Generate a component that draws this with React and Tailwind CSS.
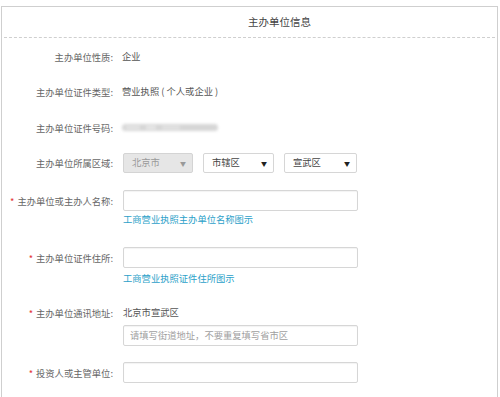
import React from "react";

const font = { fontFamily: '"Noto Sans CJK SC", "Noto Sans", sans-serif' };

function Label({ children, req }) {
  return (
    <div className="w-[120px] shrink-0 text-right text-[9.3px] text-[#666] leading-[14px] pr-[9px] whitespace-nowrap">
      {req && <span className="text-[#e4393c] mr-[3px]">*</span>}
      {children}:
    </div>
  );
}

function Input({ placeholder }) {
  return (
    <div className="w-[235px] h-[21px] border border-[#d6d6d6] rounded-[2px] bg-white shadow-[inset_0_1px_1px_rgba(0,0,0,0.05)] flex items-center pl-[6px] text-[9.3px] text-[#a0a0a0]">
      {placeholder}
    </div>
  );
}

function Select({ text, disabled, w }) {
  return (
    <div
      className={`h-[20px] border rounded-[2px] flex items-center justify-between pl-[8px] pr-[6px] text-[9.3px] ${
        disabled ? "bg-[#e6e6e6] border-[#d4d4d4] text-[#9a9a9a]" : "bg-white border-[#d6d6d6] text-[#444]"
      }`}
      style={{ width: w }}
    >
      <span>{text}</span>
      <span className={`text-[6px] ${disabled ? "text-[#999]" : "text-[#222]"}`}>▼</span>
    </div>
  );
}

export default function App() {
  return (
    <div className="w-[500px] h-[397px] bg-white overflow-hidden pt-[6px]" style={font}>
      <div className="ml-[1px] w-[497px] h-[400px] border border-b-0 border-[#cfcfcf]">
        <div className="h-[30px] flex items-center justify-center pl-[60px] text-[10.5px] text-[#444]">
          主办单位信息
        </div>
        <div className="mx-[2px] border-b border-dashed border-[#cfcfcf]" />

        {/* row 1 */}
        <div className="mt-[8px] h-[21px] flex items-center">
          <Label>主办单位性质</Label>
          <div className="text-[9.3px] text-[#555]">企业</div>
        </div>

        {/* row 2 */}
        <div className="mt-[14px] h-[21px] flex items-center">
          <Label>主办单位证件类型</Label>
          <div className="text-[9.3px] text-[#555] whitespace-pre">营业执照 ( 个人或企业 )</div>
        </div>

        {/* row 3 */}
        <div className="mt-[15px] h-[21px] flex items-center">
          <Label>主办单位证件号码</Label>
          <div className="w-[96px] h-[7px] bg-[#d6d6d6] blur-[1.5px] rounded-sm flex gap-[6px] px-[4px] items-center">
            <div className="w-[14px] h-[3px] bg-[#e6e6e6]" />
            <div className="w-[10px] h-[3px] bg-[#eaeaea]" />
            <div className="w-[18px] h-[3px] bg-[#e4e4e4]" />
          </div>
        </div>

        {/* row 4 */}
        <div className="mt-[15px] h-[20px] flex items-center">
          <Label>主办单位所属区域</Label>
          <div className="flex gap-[10px] ml-[1px]">
            <Select text="北京市" disabled w={70} />
            <Select text="市辖区" w={71} />
            <Select text="宣武区" w={73} />
          </div>
        </div>

        {/* row 5 */}
        <div className="mt-[17px] flex items-start">
          <div className="h-[21px] flex items-center">
            <Label req>主办单位或主办人名称</Label>
          </div>
          <div className="ml-[1px]">
            <Input />
            <div className="mt-[1px] text-[9.3px] leading-[14px] text-[#2c9fc9]">工商营业执照主办单位名称图示</div>
          </div>
        </div>

        {/* row 6 */}
        <div className="mt-[21px] flex items-start">
          <div className="h-[21px] flex items-center">
            <Label req>主办单位证件住所</Label>
          </div>
          <div className="ml-[1px]">
            <Input />
            <div className="mt-[3px] text-[9.3px] leading-[14px] text-[#2c9fc9]">工商营业执照证件住所图示</div>
          </div>
        </div>

        {/* row 7 */}
        <div className="mt-[20px] flex items-start">
          <div className="h-[16px] flex items-center">
            <Label req>主办单位通讯地址</Label>
          </div>
          <div className="ml-[1px]">
            <div className="h-[16px] flex items-center text-[9.3px] text-[#555]">北京市宣武区</div>
            <div className="mt-[4px]">
              <Input placeholder="请填写街道地址，不要重复填写省市区" />
            </div>
          </div>
        </div>

        {/* row 8 */}
        <div className="mt-[16px] flex items-start">
          <div className="h-[21px] flex items-center">
            <Label req>投资人或主管单位</Label>
          </div>
          <div className="ml-[1px]">
            <Input />
          </div>
        </div>
      </div>
    </div>
  );
}
